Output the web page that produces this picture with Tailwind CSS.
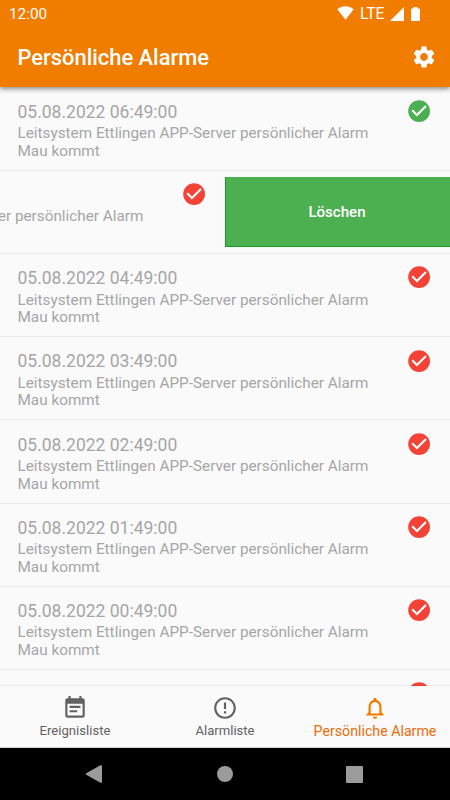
<!DOCTYPE html>
<html lang="de">
<head>
  <meta charset="UTF-8" />
  <title>Persönliche Alarme</title>
  <meta name="viewport" content="width=device-width, initial-scale=1.0" />
  <!-- Tailwind CSS CDN -->
  <script src="https://cdn.jsdelivr.net/npm/@tailwindcss/browser@4"></script>
</head>
<body class="bg-[#fafafa] font-['Roboto',sans-serif]">
  <div class="w-[450px] h-[800px] flex flex-col overflow-hidden">

    <!-- Status bar + app bar -->
    <header class="relative z-10 h-[87px] shrink-0 bg-[#f07c00] text-white shadow-[0_2px_5px_rgba(0,0,0,0.45)]">
      <div class="h-[27px] pl-[9px] pr-[30px] flex items-center justify-between">
        <span class="mt-[2px] text-[15.3px] leading-[27px]">12:00</span>
        <div class="flex items-center">
          <svg class="mt-[-2px] w-[17px] h-[14px]" viewBox="0 0 17 14" fill="currentColor"><path d="M8.5 13.7L.3 3.2C2.6 1.3 5.4.2 8.5.2s5.9 1.1 8.2 3z"/></svg>
          <span class="ml-[6px] w-[26px] text-[15.7px] leading-[27px] tracking-[-0.1px]">LTE</span>
          <svg class="ml-[4px] w-[14px] h-[14px]" viewBox="0 0 14 14" fill="currentColor"><path d="M0 14L14 0v14z"/></svg>
          <svg class="ml-[7px] w-[9px] h-[14px]" viewBox="0 0 9 14" fill="currentColor"><path d="M2.5 0h4v1.5H8c.6 0 1 .4 1 1V13c0 .6-.4 1-1 1H1c-.6 0-1-.4-1-1V2.5c0-.6.4-1 1-1h1.5z"/></svg>
        </div>
      </div>
      <div class="h-[60px] pl-[17.5px] pr-[13px] flex items-center justify-between">
        <h1 class="mt-[2px] text-[21.9px] leading-[26px] font-medium">Persönliche Alarme</h1>
        <svg class="w-[26px] h-[26px]" viewBox="0 0 24 24" fill="currentColor"><path d="M19.14 12.94c.04-.3.06-.61.06-.94 0-.32-.02-.64-.07-.94l2.03-1.58c.18-.14.23-.41.12-.61l-1.92-3.32c-.12-.22-.37-.29-.59-.22l-2.39.96c-.5-.38-1.03-.7-1.62-.94l-.36-2.54c-.04-.24-.24-.41-.48-.41h-3.84c-.24 0-.43.17-.47.41l-.36 2.54c-.59.24-1.13.57-1.62.94l-2.39-.96c-.22-.08-.47 0-.59.22L2.74 8.87c-.12.21-.08.47.12.61l2.03 1.58c-.05.3-.09.63-.09.94s.02.64.07.94l-2.03 1.58c-.18.14-.23.41-.12.61l1.92 3.32c.12.22.37.29.59.22l2.39-.96c.5.38 1.03.7 1.62.94l.36 2.54c.05.24.24.41.48.41h3.84c.24 0 .44-.17.47-.41l.36-2.54c.59-.24 1.13-.56 1.62-.94l2.39.96c.22.08.47 0 .59-.22l1.92-3.32c.12-.22.07-.47-.12-.61l-2.01-1.58zM12 15.6c-1.98 0-3.6-1.62-3.6-3.6s1.62-3.6 3.6-3.6 3.6 1.62 3.6 3.6-1.62 3.6-3.6 3.6z"/></svg>
      </div>
    </header>

    <!-- Alarm list -->
    <ul id="alarmList" class="flex-1 min-h-0 pt-[0.6px] overflow-hidden"></ul>

    <!-- Bottom navigation -->
    <nav class="relative h-[62px] shrink-0 bg-[#fafafa] border-b border-[#d0d0d0] grid grid-cols-3 text-[13.1px] leading-[16px] text-[#616161] shadow-[0_-1px_1px_rgba(0,0,0,0.06)]">
      <a class="flex flex-col items-center pt-[9px]">
        <svg class="w-[26px] h-[26px]" viewBox="0 0 24 24" fill="currentColor"><path d="M17 10H7v2h10v-2zm2-7h-1V1h-2v2H8V1H6v2H5c-1.11 0-1.99.9-1.99 2L3 19c0 1.1.89 2 2 2h14c1.1 0 2-.9 2-2V5c0-1.1-.9-2-2-2zm0 16H5V8h14v11zm-5-5H7v2h7v-2z"/></svg>
        <span class="mt-[2px]">Ereignisliste</span>
      </a>
      <a class="flex flex-col items-center pt-[9px]">
        <svg class="w-[26px] h-[26px]" viewBox="0 0 24 24" fill="currentColor"><path d="M11 15h2v2h-2zm0-8h2v6h-2zm.99-5C6.47 2 2 6.48 2 12s4.47 10 9.99 10C17.52 22 22 17.52 22 12S17.52 2 11.99 2zM12 20c-4.42 0-8-3.58-8-8s3.58-8 8-8 8 3.58 8 8-3.58 8-8 8z"/></svg>
        <span class="mt-[2px]">Alarmliste</span>
      </a>
      <a class="flex flex-col items-center pt-[9px] text-[#f07c00]">
        <svg class="w-[26px] h-[26px]" viewBox="0 0 24 24" fill="currentColor"><path d="M12 22c1.1 0 2-.9 2-2h-4c0 1.1.9 2 2 2zm6-6v-5c0-3.07-1.63-5.64-4.5-6.32V4c0-.83-.67-1.5-1.5-1.5s-1.5.67-1.5 1.5v.68C7.64 5.36 6 7.92 6 11v5l-2 2v1h16v-1l-2-2zm-2 1H8v-6c0-2.48 1.51-4.5 4-4.5s4 2.02 4 4.5v6z"/></svg>
        <span class="mt-[2px] text-[14.2px] text-[#ea6d0c] whitespace-nowrap">Persönliche Alarme</span>
      </a>
    </nav>

    <!-- System navigation -->
    <div class="h-[52px] shrink-0 bg-black text-[#9b9b9b] pl-[85px] pr-[87px] flex items-center justify-between">
      <svg class="w-[17px] h-[18px]" viewBox="0 0 17 18" fill="currentColor"><path d="M1.3 8.2L15.4.3c.8-.4 1.6 0 1.6.8v15.8c0 .8-.8 1.2-1.6.8L1.3 9.8c-.7-.4-.7-1.2 0-1.6z"/></svg>
      <span class="ml-[1px] w-4 h-4 rounded-full bg-[#9b9b9b]"></span>
      <span class="w-[17px] h-[17px] rounded-[1px] bg-[#9b9b9b]"></span>
    </div>
  </div>

  <script>
    const message = "Leitsystem Ettlingen APP-Server persönlicher Alarm Mau kommt";
    const alarms = [
      { time: "05.08.2022 06:49:00", color: "text-[#4caf50]" },
      { time: "05.08.2022 05:49:00", color: "text-[#f44336]", swiped: true },
      { time: "05.08.2022 04:49:00", color: "text-[#f44336]" },
      { time: "05.08.2022 03:49:00", color: "text-[#f44336]" },
      { time: "05.08.2022 02:49:00", color: "text-[#f44336]" },
      { time: "05.08.2022 01:49:00", color: "text-[#f44336]" },
      { time: "05.08.2022 00:49:00", color: "text-[#f44336]" },
      { time: "", color: "text-[#f44336]" },
    ];

    function renderCheck(color) {
      return `
        <svg class="w-[26.2px] h-[26.2px] shrink-0 mt-[10.5px] ${color}" viewBox="0 0 24 24">
          <circle cx="12" cy="12" r="10" fill="currentColor"/>
          <path d="M10 17l-5-5 1.41-1.41L10 14.17l7.59-7.59L19 8l-9 9z" fill="#fff"/>
        </svg>
      `;
    }

    // A swiped row shows only the end of its message beside the delete button
    function renderSwiped(a) {
      return `
        <div class="w-[225px] h-full flex justify-end overflow-hidden">
          <div class="w-[450px] shrink-0 pl-[17.5px] pr-[17.5px] flex justify-between">
            <p class="pt-[37.5px] text-[15.3px] leading-[17.5px] whitespace-nowrap">Leitsystem Ettlingen APP-Server persönlicher Alarm</p>
            ${renderCheck(a.color)}
          </div>
        </div>
        <button class="w-[225px] h-[70px] mt-[6px] pt-[2px] pr-[2px] shrink-0 bg-[#4caf50] border-l border-b border-[#169b24] text-white text-[15.1px] font-medium">Löschen</button>
      `;
    }

    function renderAlarm(a) {
      return `
        <div class="w-[370px] pt-[14.2px]">
          <p class="text-[17.5px] leading-[21px]">${a.time}</p>
          <p class="mt-[2.5px] text-[15.3px] leading-[17.5px]">${a.time && message}</p>
        </div>
        ${renderCheck(a.color)}
      `;
    }

    document.getElementById("alarmList").innerHTML = alarms.map(a => `
      <li class="h-[83.2px] border-b border-[#e9e9e9] flex text-[#a6a6a6] ${a.swiped ? "" : "pl-[17.5px] pr-[17.5px] justify-between"}">
        ${a.swiped ? renderSwiped(a) : renderAlarm(a)}
      </li>
    `).join("");
  </script>
</body>
</html>
